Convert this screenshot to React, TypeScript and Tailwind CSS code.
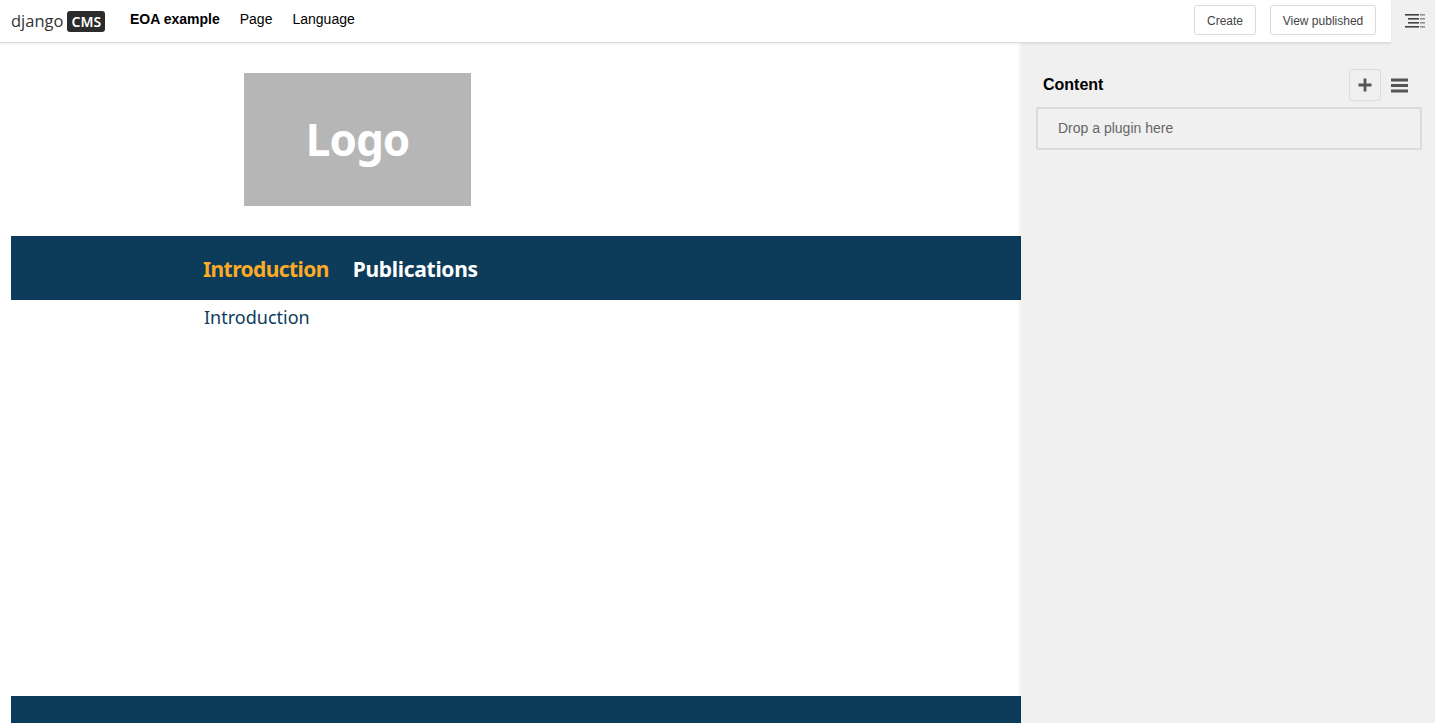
import React from 'react';

const sans = "font-['Liberation_Sans',Arial,sans-serif]";
const pageFont = "font-['Noto_Sans',sans-serif]";

const ToggleIcon: React.FC = () => (
    <svg width="20" height="14" viewBox="0 0 20 14" className="text-[#444] translate-x-[2px] -translate-y-[1px]">
        <g fill="currentColor">
            <rect x="0" y="0" width="14" height="1.6" />
            <rect x="3" y="4" width="11" height="1.6" />
            <rect x="3" y="8" width="11" height="1.6" />
            <rect x="0" y="12" width="14" height="1.6" />
            <rect x="15" y="0" width="5" height="1.6" opacity="0.55" />
            <rect x="15" y="4" width="5" height="1.6" opacity="0.55" />
            <rect x="15" y="8" width="5" height="1.6" opacity="0.55" />
            <rect x="15" y="12" width="5" height="1.6" opacity="0.55" />
        </g>
    </svg>
);

const Toolbar: React.FC = () => (
    <header className={`relative z-20 h-[43px] shrink-0 flex bg-[#f0f0f0] ${sans}`}>
        <div className="flex-1 flex items-center bg-white border-b border-[#dcdcdc] shadow-[0_1px_2px_rgba(0,0,0,0.08)]">
            <div className="ml-[11px] flex items-center w-[119px]">
                <span className="font-['Open_Sans',sans-serif] text-[16.5px] text-[#333] leading-none">django</span>
                <span className="ml-[4px] h-[21px] w-[38px] rounded-[3px] bg-[#2b2b2b] text-white font-['Noto_Sans',sans-serif] font-semibold text-[14px] leading-[21px] text-center">CMS</span>
            </div>
            <nav className="flex items-center text-[14px] text-black gap-5 -mt-[4px]">
                <span className="font-bold">EOA example</span>
                <span>Page</span>
                <span>Language</span>
            </nav>
            <div className="ml-auto mr-[15px] -mt-[2px] flex items-center gap-[14px] text-[12px] text-[#444]">
                <button className="h-[30px] w-[62px] pt-px rounded-[3px] border border-[#dbdbdb] bg-white">Create</button>
                <button className="h-[30px] w-[106px] pt-px rounded-[3px] border border-[#dbdbdb] bg-white">View published</button>
            </div>
        </div>
        <div className="w-11 flex items-center justify-center">
            <ToggleIcon />
        </div>
    </header>
);

const Sidebar: React.FC = () => (
    <aside className={`relative z-10 w-[414px] shrink-0 bg-[#f0f0f0] shadow-[-2px_0_3px_rgba(0,0,0,0.06)] ${sans}`}>
        <div className="h-[64px] pl-[22px] pr-[27px] pt-[26px] flex items-start justify-between">
            <h2 className="text-[16px] font-bold text-black leading-[32px]">Content</h2>
            <div className="flex items-center gap-[10px]">
                <button className="w-8 h-8 rounded-[3px] border border-[#dbdbdb] flex items-center justify-center">
                    <svg width="14" height="14" viewBox="0 0 14 14" className="text-[#555]">
                        <path d="M5.6 0.5h2.8v5.1h5.1v2.8H8.4v5.1H5.6V8.4H0.5V5.6h5.1z" fill="currentColor" />
                    </svg>
                </button>
                <svg width="17" height="15" viewBox="0 0 17 15" className="text-[#555]">
                    <g fill="currentColor">
                        <rect x="0" y="0.5" width="17" height="3" />
                        <rect x="0" y="6" width="17" height="3" />
                        <rect x="0" y="11.5" width="17" height="3" />
                    </g>
                </svg>
            </div>
        </div>
        <div className="ml-[15px] mr-[13px] h-[43px] rounded-[2px] border-2 border-[#dbdbdb] pl-[20px] flex items-center text-[14px] text-[#666]">
            Drop a plugin here
        </div>
    </aside>
);

const App: React.FC = () => (
    <div className="h-[723px] w-[1435px] overflow-hidden flex flex-col bg-white">
        <Toolbar />
        <div className="flex flex-1 min-h-0">
            <main className={`flex-1 flex flex-col pl-[11px] ${pageFont}`}>
                <div className="ml-[233px] mt-[30px] h-[133px] w-[227px] pb-[2px] bg-[#b6b6b6] flex items-center justify-center text-white font-bold text-[44px] tracking-[-1px]">
                    Logo
                </div>
                <nav className="mt-[30px] h-16 bg-[#0d3c5a] pl-[192px] pt-[3px] flex items-center gap-6 font-bold text-[21px]">
                    <span className="text-[#fbab25] tracking-[-0.6px]">Introduction</span>
                    <span className="text-white tracking-[-0.3px]">Publications</span>
                </nav>
                <p className="ml-[193px] mt-[4px] text-[18px] leading-[26px] text-[#0d3c5a]">Introduction</p>
                <footer className="mt-auto h-[27px] bg-[#0d3c5a]" />
            </main>
            <Sidebar />
        </div>
    </div>
);

export default App;
